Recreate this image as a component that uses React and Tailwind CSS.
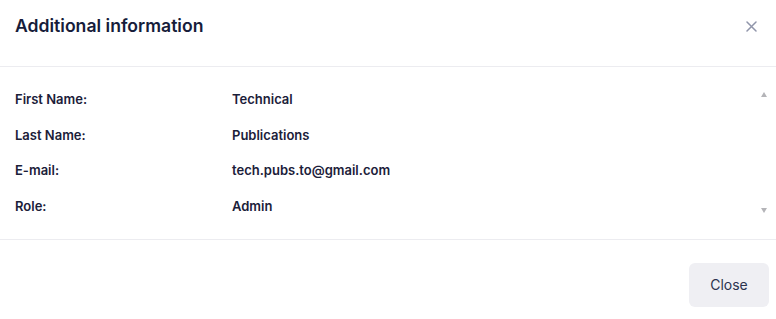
import React from 'react';

const rows = [
  ['First Name:', 'Technical'],
  ['Last Name:', 'Publications'],
  ['E-mail:', 'tech.pubs.to@gmail.com'],
  ['Role:', 'Admin'],
];

export default function App() {
  return (
    <div className="h-[319px] w-[776px] overflow-hidden bg-white font-['Inter',sans-serif] text-[#1b2039]">
      {/* header */}
      <div className="flex h-[67px] items-start justify-between border-b border-[#ececf0] pl-[15px] pr-[19px] pt-[14px]">
        <h2 className="text-[17.6px] font-semibold leading-6 text-[#161c3a]">Additional information</h2>
        <button className="mt-[7px] text-[#9095aa]">
          <svg width="11" height="11" viewBox="0 0 11 11" fill="none" stroke="currentColor" strokeWidth="1.5" strokeLinecap="round">
            <path d="M1 1l9 9M10 1l-9 9" />
          </svg>
        </button>
      </div>

      {/* body */}
      <div className="relative h-[173px] border-b border-[#ececf0] pb-[13px] pl-[15px] pt-[15px]">
        <div className="grid grid-cols-[217px_1fr]">
          {rows.map(([label, value]) => (
            <React.Fragment key={label}>
              <div className="flex h-[35.7px] items-center text-[13px] font-semibold">{label}</div>
              <div className="flex h-[35.7px] items-center text-[13px] font-semibold">{value}</div>
            </React.Fragment>
          ))}
        </div>
        <div className="absolute right-[9px] top-[25px] h-0 w-0 border-x-[3.5px] border-b-[5px] border-x-transparent border-b-[#b4b4b8]" />
        <div className="absolute right-[9px] top-[141px] h-0 w-0 border-x-[3.5px] border-t-[5px] border-x-transparent border-t-[#b4b4b8]" />
      </div>

      {/* footer */}
      <div className="flex justify-end pr-[7px] pt-[23px]">
        <button className="h-[44px] w-[80px] rounded-[6px] bg-[#efeff3] text-[14px] leading-[42px] text-[#2b334e]">Close</button>
      </div>
    </div>
  );
}
